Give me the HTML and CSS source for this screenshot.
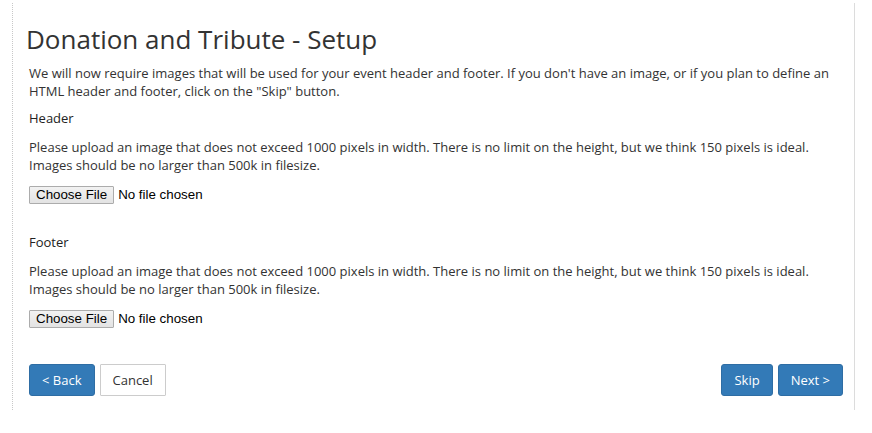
FILE: index.html
```html
<!DOCTYPE html>
<html>
<head>
<meta charset="utf-8">
<title>Donation and Tribute - Setup</title>
<link rel="stylesheet" href="styles.css">
</head>
<body>
<div class="panel">
  <h2 class="title">Donation and Tribute - Setup</h2>
  <p class="intro">We will now require images that will be used for your event header and footer. If you don't have an image, or if you plan to define an HTML header and footer, click on the "Skip" button.</p>

  <section class="upload">
    <div class="label">Header</div>
    <p class="help">Please upload an image that does not exceed 1000 pixels in width. There is no limit on the height, but we think 150 pixels is ideal. Images should be no larger than 500k in filesize.</p>
    <label class="file"><span class="file-btn">Choose File</span><span class="file-name">No file chosen</span></label>
  </section>

  <section class="upload upload-footer">
    <div class="label">Footer</div>
    <p class="help">Please upload an image that does not exceed 1000 pixels in width. There is no limit on the height, but we think 150 pixels is ideal. Images should be no larger than 500k in filesize.</p>
    <label class="file"><span class="file-btn">Choose File</span><span class="file-name">No file chosen</span></label>
  </section>

  <div class="actions">
    <div class="group">
      <button class="btn btn-primary">&lt; Back</button>
      <button class="btn btn-default">Cancel</button>
    </div>
    <div class="group">
      <button class="btn btn-primary">Skip</button>
      <button class="btn btn-primary">Next &gt;</button>
    </div>
  </div>
</div>
</body>
</html>
```

FILE: styles.css
```css
html, body {
  margin: 0;
  padding: 0;
  background: #fff;
}

body {
  font-family: "Open Sans", "Noto Sans", sans-serif;
  font-size: 13px;
  line-height: 18px;
  color: #333;
}

.panel {
  margin: 3px 0 0 12px;
  width: 814px;
  height: 407px;
  box-sizing: content-box;
  border-left: 1px dotted #c8c8c8;
  border-right: 1px solid #dcdcdc;
  padding: 0 11px 0 16px;
}

.title {
  margin: 0;
  padding-top: 21px;
  font-size: 26px;
  line-height: 30px;
  font-weight: 400;
  color: #333;
  margin-left: -3px;
}

.intro {
  margin: 10px 0 0;
}

.upload {
  margin-top: 9px;
}

.upload-footer {
  margin-top: 29px;
}

.label {
  font-weight: 400;
  color: #222;
}

.help {
  margin: 11px 0 0;
}

.file {
  display: flex;
  align-items: center;
  margin-top: 12px;
  font-family: "Liberation Sans", Arial, sans-serif;
  font-size: 13.33px;
  color: #000;
  height: 18px;
}

.file-btn {
  display: inline-flex;
  align-items: center;
  height: 18px;
  box-sizing: border-box;
  padding: 0 6px;
  border: 1px solid #acacac;
  border-radius: 1px;
  background: linear-gradient(#f2f2f2, #e3e3e3);
  line-height: 16px;
}

.file-name {
  margin-left: 4px;
}

.actions {
  display: flex;
  justify-content: space-between;
  margin-top: 36px;
}

.group {
  display: flex;
  gap: 5px;
}

.btn {
  font-family: "Open Sans", "Noto Sans", sans-serif;
  font-size: 13px;
  line-height: 18px;
  padding: 6px 12px;
  border: 1px solid transparent;
  border-radius: 3px;
  cursor: pointer;
  height: 32px;
  box-sizing: border-box;
}

.btn-primary {
  background: #337ab7;
  border-color: #2e6da4;
  color: #fff;
}

.btn-default {
  background: #fff;
  border-color: #ccc;
  color: #333;
  border-radius: 1px;
}
```
